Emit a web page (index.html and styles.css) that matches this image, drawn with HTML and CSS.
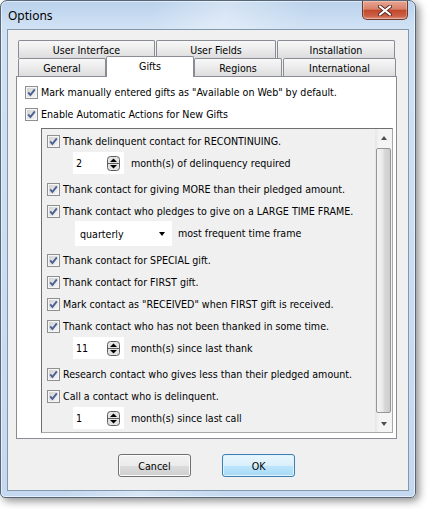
FILE: index.html
```html
<!DOCTYPE html>
<html lang="en">
<head>
  <meta charset="UTF-8">
  <title>Options</title>
  <link rel="stylesheet" href="styles.css">
</head>
<body>

  <svg class="defs" width="0" height="0">
    <defs>
      <linearGradient id="cbfill" x1="0" y1="0" x2="1" y2="1">
        <stop offset="0" stop-color="#d2d2d2"/>
        <stop offset="1" stop-color="#f5f5f5"/>
      </linearGradient>
      <symbol id="cb" viewBox="0 0 13 13">
        <rect x="0.5" y="0.5" width="12" height="12" fill="#f6f6f6" stroke="#8e8f8f"/>
        <rect x="2" y="2" width="9" height="9" fill="url(#cbfill)"/>
        <path d="M3.2 6.4 L5.4 9 L9.8 3.3" fill="none" stroke="#4a5f92" stroke-width="1.9"/>
      </symbol>
      <symbol id="spin" viewBox="0 0 13 15">
        <rect x="0.5" y="0.5" width="12" height="14" rx="3" fill="#e4e4e4" stroke="#5c5c5c"/>
        <line x1="1" y1="7.5" x2="12" y2="7.5" stroke="#5c5c5c"/>
        <path d="M3 6 L6.5 2.5 L10 6 Z" fill="#000"/>
        <path d="M3 9 L6.5 12.5 L10 9 Z" fill="#000"/>
      </symbol>
    </defs>
  </svg>

  <div class="window">
    <div class="titlebar">
      <span class="title">Options</span>
      <div class="close">
        <svg width="14" height="11" viewBox="0 0 14 11">
          <path d="M2 1.5 L12 9.5 M12 1.5 L2 9.5" stroke="#5a2a20" stroke-width="4" stroke-linecap="round"/>
          <path d="M2 1.5 L12 9.5 M12 1.5 L2 9.5" stroke="#fff" stroke-width="2.2" stroke-linecap="round"/>
        </svg>
      </div>
    </div>

    <div class="client">
      <div class="tabs">
        <div class="tabrow">
          <div class="tab w-ui">User Interface</div>
          <div class="tab w-fields">User Fields</div>
          <div class="tab w-install">Installation</div>
        </div>
        <div class="tabrow">
          <div class="tab w-general">General</div>
          <div class="tab active w-gifts">Gifts</div>
          <div class="tab w-regions">Regions</div>
          <div class="tab w-intl">International</div>
        </div>
      </div>

      <div class="panel">
        <label class="check"><svg class="cb"><use href="#cb"/></svg>Mark manually entered gifts as "Available on Web" by default.</label>
        <label class="check"><svg class="cb"><use href="#cb"/></svg>Enable Automatic Actions for New Gifts</label>

        <div class="actions">
          <div class="rules">
            <label class="check"><svg class="cb"><use href="#cb"/></svg>Thank delinquent contact for RECONTINUING.</label>
            <div class="srow">
              <div class="spinbox"><span>2</span><svg class="spin"><use href="#spin"/></svg></div>
              <span>month(s) of delinquency required</span>
            </div>
            <label class="check"><svg class="cb"><use href="#cb"/></svg>Thank contact for giving MORE than their pledged amount.</label>
            <label class="check"><svg class="cb"><use href="#cb"/></svg>Thank contact who pledges to give on a LARGE TIME FRAME.</label>
            <div class="drow">
              <div class="select"><span>quarterly</span><i class="arrow"></i></div>
              <span>most frequent time frame</span>
            </div>
            <label class="check"><svg class="cb"><use href="#cb"/></svg>Thank contact for SPECIAL gift.</label>
            <label class="check"><svg class="cb"><use href="#cb"/></svg>Thank contact for FIRST gift.</label>
            <label class="check"><svg class="cb"><use href="#cb"/></svg>Mark contact as "RECEIVED" when FIRST gift is received.</label>
            <label class="check"><svg class="cb"><use href="#cb"/></svg>Thank contact who has not been thanked in some time.</label>
            <div class="srow">
              <div class="spinbox"><span>11</span><svg class="spin"><use href="#spin"/></svg></div>
              <span>month(s) since last thank</span>
            </div>
            <label class="check"><svg class="cb"><use href="#cb"/></svg>Research contact who gives less than their pledged amount.</label>
            <label class="check"><svg class="cb"><use href="#cb"/></svg>Call a contact who is delinquent.</label>
            <div class="srow">
              <div class="spinbox"><span>1</span><svg class="spin"><use href="#spin"/></svg></div>
              <span>month(s) since last call</span>
            </div>
          </div>

          <div class="scrollbar">
            <div class="sb-btn"><i class="tri-up"></i></div>
            <div class="sb-thumb"></div>
            <div class="sb-btn"><i class="tri-down"></i></div>
          </div>
        </div>
      </div>

      <div class="buttons">
        <button class="btn">Cancel</button>
        <button class="btn default">OK</button>
      </div>
    </div>
  </div>

</body>
</html>
```

FILE: styles.css
```css
* {
  box-sizing: border-box;
}

body {
  margin: 0;
  width: 428px;
  height: 509px;
  overflow: hidden;
  background: #fff;
  font-family: "DejaVu Sans Condensed", "DejaVu Sans", sans-serif;
  font-size: 10.6px;
  color: #000;
}

.defs {
  position: absolute;
}

/* window frame */

.window {
  width: 416px;
  height: 498px;
  padding: 0 6px 6px;
  display: flex;
  flex-direction: column;
  border: 1px solid #56677a;
  border-radius: 7px 7px 5px 5px;
  background:
    linear-gradient(100deg, rgba(255,255,255,0) 30%, rgba(255,255,255,0.35) 45%, rgba(255,255,255,0) 62%),
    linear-gradient(#bad2ec, #d0e1f4 26px, #c4d9f0);
  box-shadow: 3px 3px 8px rgba(0,0,0,0.45), inset 0 0 0 1px rgba(255,255,255,0.55);
}

.titlebar {
  height: 28px;
  flex: none;
  display: flex;
  align-items: center;
}

.title {
  font-family: "Noto Sans", sans-serif;
  font-size: 12px;
  margin-left: 1px;
}

.close {
  align-self: flex-start;
  margin-left: auto;
  margin-right: 1px;
  width: 46px;
  height: 19px;
  display: flex;
  align-items: center;
  justify-content: center;
  border: 1px solid #6d3a2e;
  border-top: none;
  border-radius: 0 0 5px 5px;
  background: linear-gradient(#e8a592, #d6826b 45%, #c2482d 52%, #cc6248 85%, #e09684);
  box-shadow: inset 0 0 0 1px rgba(255,255,255,0.3);
}

.client {
  flex: 1;
  border: 1px solid #8397ad;
  background: #f0f0f0;
  padding: 10px 11px 0 8px;
}

/* tabs */

.tabrow {
  display: flex;
  height: 18px;
  padding-left: 2px;
}

.tab {
  height: 18px;
  border: 1px solid #898c95;
  border-bottom: none;
  border-radius: 2px 2px 0 0;
  background: linear-gradient(#f8f8f8, #ebebeb 50%, #dddddd);
  display: flex;
  align-items: center;
  justify-content: center;
}

.w-ui { width: 137px; margin-right: 1px; }
.w-fields { width: 120px; margin-right: 1px; }
.w-install { width: 118px; }
.w-general { width: 88px; }
.w-gifts { width: 88px; }
.w-regions { width: 88px; margin-right: 1px; }
.w-intl { width: 113px; }

.tab.active {
  position: relative;
  z-index: 1;
  height: 21px;
  margin-top: -2px;
  background: #fff;
  padding-bottom: 2px;
}

.panel {
  width: 381px;
  height: 363px;
  border: 1px solid #898c95;
  background: #fff;
  padding: 4px 0 0 8px;
}

.check {
  display: flex;
  align-items: center;
  gap: 3px;
  height: 22px;
  white-space: nowrap;
}

.cb {
  width: 13px;
  height: 13px;
  flex: none;
}

/* automatic actions box */

.actions {
  display: flex;
  height: 305px;
  margin: 3px 3px 0 16px;
  border: 1px solid;
  border-color: #6f6f6f #a9a9a9 #a9a9a9 #6f6f6f;
  background: #f0f0f0;
}

.rules {
  flex: 1;
  padding: 1px 0 0 5px;
  overflow: hidden;
}

.srow {
  display: flex;
  align-items: flex-start;
  gap: 7px;
  height: 26px;
  padding-left: 26px;
  white-space: nowrap;
}

.srow > span {
  line-height: 22px;
}

.spinbox {
  width: 51px;
  height: 22px;
  background: #fff;
  display: flex;
  align-items: center;
  padding: 0 4px 0 3px;
}

.spin {
  width: 13px;
  height: 15px;
  margin-left: auto;
}

.drow {
  display: flex;
  align-items: flex-start;
  gap: 6px;
  height: 27px;
  padding-left: 28px;
  white-space: nowrap;
}

.drow > span {
  line-height: 23px;
}

.select {
  width: 97px;
  height: 25px;
  margin-top: -1px;
  background: #fff;
  display: flex;
  align-items: center;
  padding: 0 5px 0 5px;
}

.arrow {
  margin-left: auto;
  margin-right: 2px;
  border-left: 3.5px solid transparent;
  border-right: 3.5px solid transparent;
  border-top: 4px solid #000;
}

.scrollbar {
  width: 17px;
  display: flex;
  flex-direction: column;
  background: linear-gradient(90deg, #e6e6e6, #f4f4f4 25%, #f4f4f4);
}

.sb-btn {
  height: 17px;
  display: flex;
  align-items: center;
  justify-content: center;
}

.tri-up {
  border-left: 3.5px solid transparent;
  border-right: 3.5px solid transparent;
  border-bottom: 4px solid #505050;
}

.tri-down {
  border-left: 3.5px solid transparent;
  border-right: 3.5px solid transparent;
  border-top: 4px solid #505050;
}

.sb-thumb {
  flex: 1;
  margin: 2px 1px;
  border: 1px solid #959595;
  border-radius: 2px;
  background: linear-gradient(90deg, #f4f4f4, #e9e9e9 45%, #d9d9d9 55%, #cdcdcd);
}

/* dialog buttons */

.buttons {
  display: flex;
  justify-content: center;
  gap: 31px;
  margin-top: 15px;
}

.btn {
  width: 73px;
  height: 23px;
  font: inherit;
  color: #000;
  border: 1px solid #707070;
  border-radius: 3px;
  background: linear-gradient(#f2f2f2, #ebebeb 50%, #dddddd 50%, #cfcfcf);
  box-shadow: inset 0 0 0 1px #fcfcfc;
}

.btn.default {
  border-color: #3c7fb1;
  background: linear-gradient(#eaf6fd, #d9f0fc 50%, #bee6fd 50%, #a7d9f5);
  box-shadow: inset 0 0 0 1px #dff2fd;
}
```
